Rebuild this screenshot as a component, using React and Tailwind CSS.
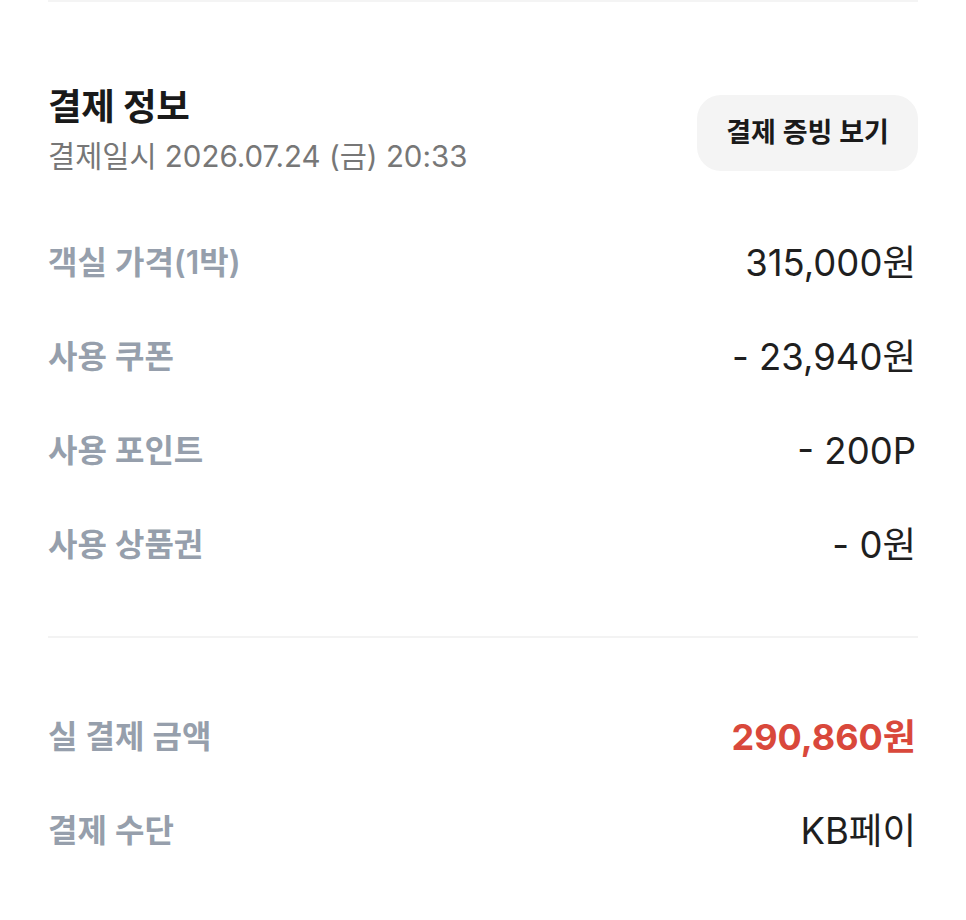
export default function App() {
  const rows1 = [
    ["객실 가격(1박)", "315,000원"],
    ["사용 쿠폰", "- 23,940원"],
    ["사용 포인트", "- 200P"],
    ["사용 상품권", "- 0원"],
  ];
  return (
    <div className="min-h-[920px] bg-white px-[48px] font-['Inter','Noto_Sans_CJK_KR',sans-serif]">
      <div className="h-[2px] bg-[#f4f4f4]" />
      <div className="flex items-start justify-between pt-[85px]">
        <div>
          <div className="text-[36.5px] leading-[40px] font-bold text-[#1a1a1a] tracking-[-0.3px]">결제 정보</div>
          <div className="mt-[11px] text-[29.5px] leading-[36px] text-[#777777]">결제일시 2026.07.24 (금) 20:33</div>
        </div>
        <button className="mt-[8px] h-[76px] w-[221px] rounded-[24px] bg-[#f4f4f4] text-[27px] font-semibold text-[#1a1a1a]">
          결제 증빙 보기
        </button>
      </div>
      <div className="mt-[42px]">
        {rows1.map(([l, v]) => (
          <div key={l} className="flex h-[94px] items-center justify-between">
            <span className="text-[32px] font-semibold text-[#969fac]">{l}</span>
            <span className="pr-[2px] text-[36.5px] text-[#1f1f1f]">{v}</span>
          </div>
        ))}
      </div>
      <div className="mt-[44px] h-[2px] bg-[#f3f3f3]" />
      <div className="mt-[52px]">
        <div className="flex h-[94px] items-center justify-between">
          <span className="text-[32px] font-semibold text-[#969fac]">실 결제 금액</span>
          <span className="pr-[2px] text-[36px] font-bold text-[#d9483b]">290,860원</span>
        </div>
        <div className="flex h-[94px] items-center justify-between">
          <span className="text-[32px] font-semibold text-[#969fac]">결제 수단</span>
          <span className="pr-[2px] text-[36.5px] text-[#1f1f1f]">KB페이</span>
        </div>
      </div>
    </div>
  );
}
